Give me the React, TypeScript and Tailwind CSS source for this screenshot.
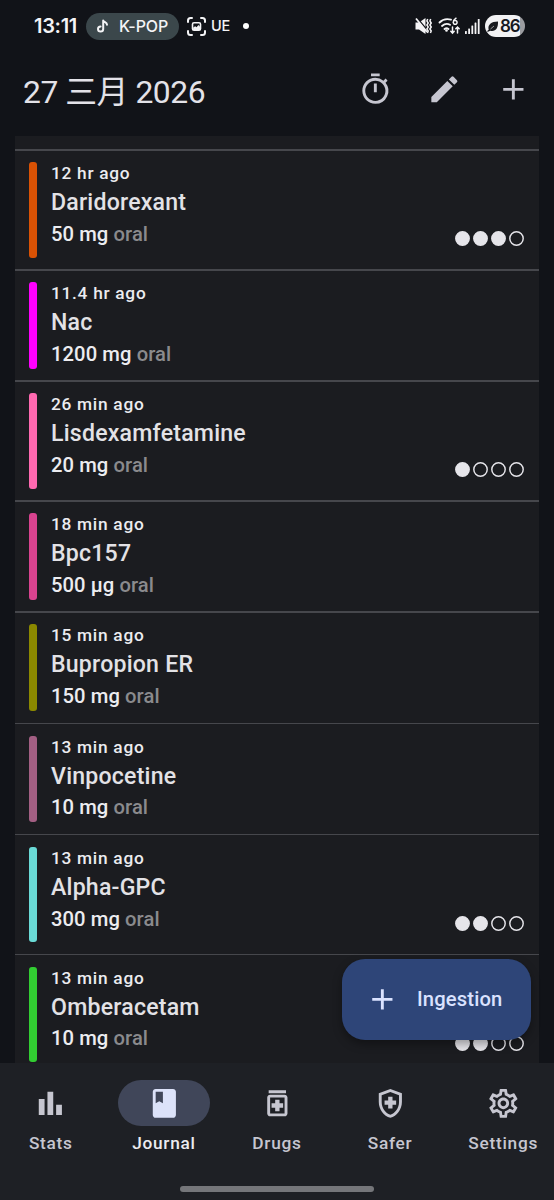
import {
  MdAdd,
  MdBarChart,
  MdBook,
  MdEdit,
  MdOutlineHealthAndSafety,
  MdOutlineMedication,
  MdOutlineSettings,
  MdOutlineTimer,
} from 'react-icons/md';

interface Ingestion {
  time: string;
  name: string;
  dose: string;
  bar: string;
  dots?: number;
}

const ingestions: Ingestion[] = [
  { time: '12 hr ago', name: 'Daridorexant', dose: '50 mg', bar: 'bg-[#d95204]', dots: 3 },
  { time: '11.4 hr ago', name: 'Nac', dose: '1200 mg', bar: 'bg-[#ff00ff]' },
  { time: '26 min ago', name: 'Lisdexamfetamine', dose: '20 mg', bar: 'bg-[#ff69b0]', dots: 1 },
  { time: '18 min ago', name: 'Bpc157', dose: '500 µg', bar: 'bg-[#d9438f]' },
  { time: '15 min ago', name: 'Bupropion ER', dose: '150 mg', bar: 'bg-[#8b8800]' },
  { time: '13 min ago', name: 'Vinpocetine', dose: '10 mg', bar: 'bg-[#a35f83]' },
  { time: '13 min ago', name: 'Alpha-GPC', dose: '300 mg', bar: 'bg-[#6adad6]', dots: 2 },
  { time: '13 min ago', name: 'Omberacetam', dose: '10 mg', bar: 'bg-[#32cd32]', dots: 2 },
];

const tabs = [
  { label: 'Stats', icon: MdBarChart },
  { label: 'Journal', icon: MdBook, active: true },
  { label: 'Drugs', icon: MdOutlineMedication },
  { label: 'Safer', icon: MdOutlineHealthAndSafety },
  { label: 'Settings', icon: MdOutlineSettings },
];

function StatusBar() {
  return (
    <div className="flex h-[52px] shrink-0 items-center pl-[34px] pr-[29px] font-['Inter',sans-serif] text-[#f4f4f6]">
      <span className="w-[52px] whitespace-nowrap text-[20px] font-semibold tracking-[-0.3px]">13:11</span>
      <div className="flex h-[27px] w-[93px] items-center rounded-full bg-[#3b474b] pl-[11px]">
        <svg className="mr-[10px] h-[14px] w-[12px] shrink-0" viewBox="0 0 12 14" fill="none" stroke="currentColor" strokeWidth="2" strokeLinecap="round" strokeLinejoin="round">
          <path d="M6.2 10V1.4c.5 2 3.8 1.8 3.8 4.4M3.6 7.4a2.6 2.6 0 1 0 2.6 2.600" />
        </svg>
        <span className="whitespace-nowrap text-[16px] font-medium tracking-[-0.1px]">K-POP</span>
      </div>
      {/* Capture notification */}
      <svg className="ml-2 h-[19px] w-[19px]" viewBox="0 0 19 19" fill="none" stroke="currentColor" strokeWidth="2" strokeLinecap="round">
        <path d="M1 5V3.500Q1 1 3.500 1H5M14 1h1.500Q18 1 18 3.500V5M1 14v1.500Q1 18 3.500 18H5M14 18h1.500Q18 18 18 15.500V14" />
        <rect x="5.500" y="5.700" width="8" height="7.600" rx="1.500" strokeWidth="1.600" />
        <path d="m6 13 .2-2.500 2-1.200 1.300 1 2-2.300 1.500 1.800V13z" fill="currentColor" stroke="none" />
      </svg>
      <span className="ml-[5px] text-[14.5px] font-medium tracking-[-0.2px]">UE</span>
      <span className="ml-[13px] h-[6px] w-[6px] rounded-full bg-white" />

      <div className="ml-auto flex items-center">
        {/* Vibrate, muted */}
        <svg className="h-[18px] w-[17px]" viewBox="0 0 17 18" fill="none">
          <path d="M.5 5.500H4L10.500 1v16L4 12.500H.5z" fill="currentColor" />
          <path d="m2.500 1.500 10 12" stroke="#111318" strokeWidth="1.600" />
          <path d="m1 1.500 11 13.500" stroke="currentColor" strokeWidth="1.800" />
          <path d="m12.700 2-.8 2 1.300 2-1.300 2 1.300 2-1.300 2 1.300 2-.8 2M15.700 2l-.8 2 1.300 2-1.300 2 1.300 2-1.300 2 1.300 2-.8 2" stroke="currentColor" strokeWidth="1.500" />
        </svg>
        {/* Wifi 6 */}
        <svg className="ml-[6px] h-[18px] w-[23px]" viewBox="0 0 23 18" fill="none" stroke="currentColor" strokeWidth="1.800" strokeLinecap="round">
          <path d="M1.500 5.500C4.500 2.400 8.500 1.600 13 2.700M4 9c2.500-2.200 5.500-2.600 8-1.200M6.500 12c1.300-1 2.700-1 4 0" />
          <circle cx="8.500" cy="13.500" r="1.300" fill="currentColor" stroke="none" />
          <path d="M18 1.200c-1.800 1.300-2.700 2.600-2.700 4a1.900 1.900 0 1 0 1.500-1.600" strokeWidth="1.500" />
          <path d="M14.500 10v6m-1.700-1.700 1.700 1.800 1.700-1.800M19.500 16v-6m-1.700 1.800 1.700-1.800 1.700 1.800" strokeWidth="1.500" />
        </svg>
        <svg className="ml-[4px] h-[15px] w-[15px]" viewBox="0 0 15 15" fill="currentColor">
          <rect x="0" y="12" width="1.800" height="3" rx=".5" />
          <rect x="3.200" y="9.500" width="1.800" height="5.500" rx=".5" />
          <rect x="6.400" y="6.500" width="1.800" height="8.500" rx=".5" />
          <rect x="9.600" y="3.500" width="1.800" height="11.500" rx=".5" />
          <rect x="12.800" y="0" width="1.800" height="15" rx=".5" />
        </svg>
        {/* Battery */}
        <div className="ml-[5px] flex h-[22px] w-[40px] items-center rounded-full bg-linear-to-r from-[#f2f2f4] from-87% to-[#9b9ca0] to-87% pl-[2px] text-[#17191e]">
          <svg className="mr-px h-[11px] w-[12px] shrink-0" viewBox="0 0 12 11">
            <path d="M0 10.500c.8-1.200 1.300-1.500 1.700-1.700C.4 3.700 4.300.6 11 .5c.3 6.700-2.300 10.300-7.700 9.200-.7.200-1.500.6-2.300 1z" fill="currentColor" />
            <path d="M3.500 8 7 5" stroke="#f2f2f4" strokeWidth=".6" />
          </svg>
          <span className="text-[17px] font-semibold leading-none tracking-[-1.1px]">86</span>
        </div>
      </div>
    </div>
  );
}

function Dots({ filled }: { filled: number }) {
  return (
    <div className="flex gap-[3px]">
      {[0, 1, 2, 3].map((i) => (
        <svg key={i} className="h-[15px] w-[15px] text-[#e6e5ea]" viewBox="0 0 15 15">
          <circle cx="7.5" cy="7.5" r="6.7" fill={i < filled ? 'currentColor' : 'none'} stroke="currentColor" strokeWidth="1.45" />
        </svg>
      ))}
    </div>
  );
}

function IngestionRow({ item }: { item: Ingestion }) {
  return (
    <div className="shrink-0">
      <div className="h-[1.5px] bg-[#46474c]" />
      <div className="flex py-[11.56px] pl-[14.5px] pr-[15px]">
        <div className={`w-[7.5px] shrink-0 rounded-[3px] ${item.bar}`} />
        <div className="ml-[14.5px] flex-1">
          <p className="text-[17.3px] font-medium leading-[23.1px] tracking-[0.72px] text-[#ececf0]">{item.time}</p>
          <p className="pt-px text-[23.1px] font-medium leading-[33.7px] tracking-[0.22px] text-[#e3e2e6]">{item.name}</p>
          <div className={`flex justify-between ${item.dots ? 'h-[37.5px]' : 'h-[28.8px]'}`}>
            <p className="text-[20.2px] font-medium leading-[28.9px] tracking-[0.08px] text-[#ececf0]">
              {item.dose} <span className="text-[#8a8a8d]">oral</span>
            </p>
            {item.dots && (
              <div className="flex items-center">
                <Dots filled={item.dots} />
              </div>
            )}
          </div>
        </div>
      </div>
    </div>
  );
}

export default function App() {
  return (
    <div className="relative flex h-[1200px] w-[554px] flex-col overflow-hidden bg-[#111318] font-['Roboto','Noto_Sans_CJK_SC',sans-serif]">
      <StatusBar />

      <header className="flex h-[84px] shrink-0 items-start justify-between px-[23px] pt-[20px] text-[#c6c6d0]">
        <h1 className="text-[31.8px] leading-[40px] tracking-[-0.45px] text-[#e3e2e8]">27 三月 2026</h1>
        <div className="flex gap-[34.5px]">
          <MdOutlineTimer size={34.7} />
          <MdEdit size={34.7} />
          <MdAdd size={34.7} />
        </div>
      </header>

      <main className="ml-[14.5px] mr-[15px] flex h-[926.5px] shrink-0 flex-col overflow-hidden bg-[#1b1c20] pt-[13.2px]">
        {ingestions.map((item) => (
          <IngestionRow key={item.name} item={item} />
        ))}
      </main>

      <nav className="flex flex-1 flex-col items-center justify-between bg-[#1e2025] pb-[8px] pt-[17.3px]">
        <div className="grid w-full grid-cols-5 gap-[11.56px]">
          {tabs.map(({ label, icon: Icon, active }) => (
            <div key={label} className="flex flex-col items-center">
              <div
                className={`flex h-[46.3px] w-[92.5px] items-center justify-center rounded-full ${
                  active ? 'bg-[#404659] text-[#dce2f9]' : 'text-[#c6c6d0]'
                }`}
              >
                <Icon size={34.7} />
              </div>
              <span
                className={`mt-[6px] text-[17.3px] font-medium leading-[23.1px] tracking-[0.72px] ${
                  active ? 'text-[#ececf0]' : 'text-[#c6c6d0]'
                }`}
              >
                {label}
              </span>
            </div>
          ))}
        </div>
        <div className="h-[6px] w-[194px] rounded-full bg-[#75767a]" />
      </nav>

      <button className="absolute bottom-[160px] right-[23px] flex h-[81px] w-[189px] items-center rounded-[23px] bg-[#2e4578] pl-[23px] text-[#dae2ff] shadow-[0_4px_10px_rgba(0,0,0,0.35)]">
        <MdAdd size={34.7} />
        <span className="ml-[17.3px] text-[20.2px] font-medium tracking-[0.14px]">Ingestion</span>
      </button>
    </div>
  );
}
